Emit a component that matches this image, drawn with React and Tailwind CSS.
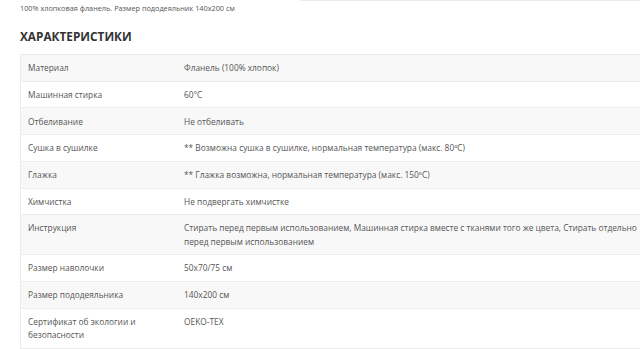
const rows = [
  ["Материал", "Фланель (100% хлопок)"],
  ["Машинная стирка", "60°C"],
  ["Отбеливание", "Не отбеливать"],
  ["Сушка в сушилке", "** Возможна сушка в сушилке, нормальная температура (макс. 80ºC)"],
  ["Глажка", "** Глажка возможна, нормальная температура (макс. 150ºC)"],
  ["Химчистка", "Не подвергать химчистке"],
  [
    "Инструкция",
    "Стирать перед первым использованием, Машинная стирка вместе с тканями того же цвета, Стирать отдельно перед первым использованием",
  ],
  ["Размер наволочки", "50x70/75 см"],
  ["Размер пододеяльника", "140x200 см"],
  ["Сертификат об экологии и безопасности", "OEKO-TEX"],
];

export default function App() {
  return (
    <div className="w-[640px] h-[349px] overflow-hidden bg-white font-['Open_Sans',sans-serif] text-[#555]">
      <div className="relative">
        <div className="absolute top-0 left-[300px] right-0 border-t border-[#ebebeb]"></div>
      </div>
      <p className="pl-5 pt-[2px] text-[7.3px] leading-[12px]">
        100% хлопковая фланель. Размер пододеяльник 140x200 см
      </p>

      <h2 className="pl-5 mt-[14px] text-[11.8px] leading-[16px] font-bold text-[#333]">
        ХАРАКТЕРИСТИКИ
      </h2>

      {/* Specs table, runs past the right edge */}
      <div className="ml-5 mt-[10px] w-[637px] border-l border-t border-[#ececec] text-[8.35px] leading-[13.33px]">
        {rows.map(([name, value], i) => (
          <div
            key={name}
            className={`flex border-b border-[#ececec] ${i % 2 === 0 ? "bg-[#f8f8f8]" : "bg-white"}`}
          >
            <div className="w-[156px] shrink-0 px-[7px] py-[6.2px]">{name}</div>
            <div className="flex-1 px-[7px] py-[6.2px]">{value}</div>
          </div>
        ))}
      </div>
    </div>
  );
}
